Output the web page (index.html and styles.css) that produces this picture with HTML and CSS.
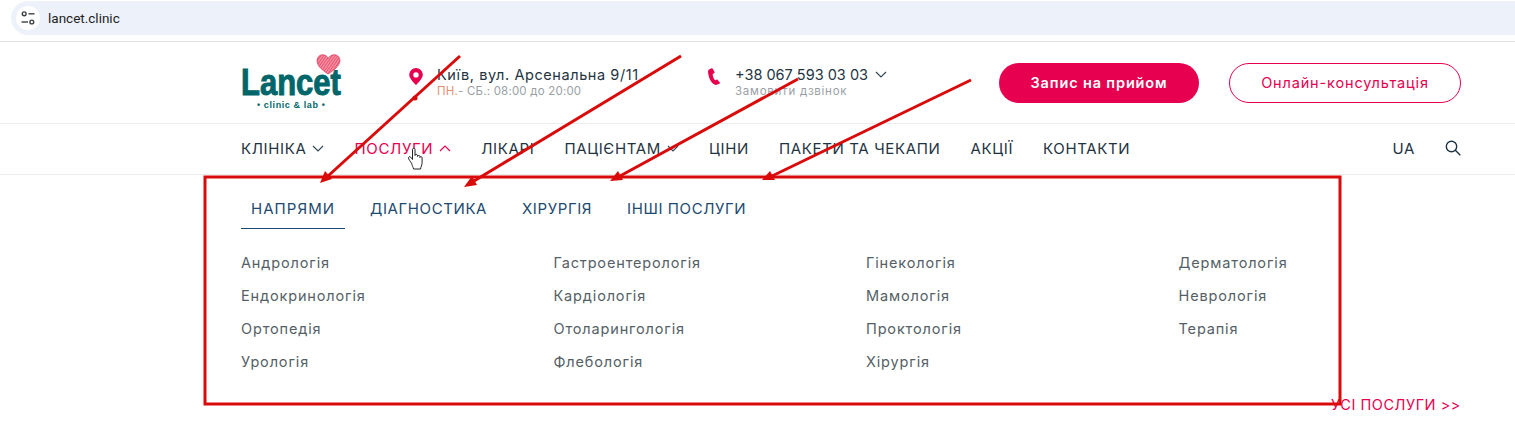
FILE: index.html
```html
<!DOCTYPE html>
<html lang="uk">
<head>
<meta charset="utf-8">
<title>Lancet</title>
<link rel="stylesheet" href="styles.css">
</head>
<body>
<div class="browser">
  <div class="urlbar">
    <span class="site-btn">
      <svg width="16" height="16" viewBox="0 0 16 16" fill="none" stroke="#3c4043" stroke-width="1.4"><circle cx="4.2" cy="3.8" r="1.9"/><path d="M8.5 3.8h6"/><circle cx="11.8" cy="12" r="1.9"/><path d="M1.5 12h6.5"/></svg>
    </span>
    <span class="url">lancet.clinic</span>
  </div>
</div>
<header class="top">
  <a class="logo">
    <svg class="heart" width="25" height="21" viewBox="0 0 26 22"><defs><pattern id="hatch" width="2.4" height="2.4" patternUnits="userSpaceOnUse" patternTransform="rotate(35)"><rect width="2.4" height="2.4" fill="#f58a9c"/><path d="M0 0v2.4" stroke="#de2f55" stroke-width="1"/></pattern></defs><path d="M12.5 21C8 17.5 1 13.500 1 7 1 3 4 .8 7 .8c2.500 0 4.500 1.400 5.800 3.800C14 2.200 16.500 .8 19 .8c3.500 0 6 2.600 6 6 0 5.700-7 10.500-12.500 14.200z" fill="url(#hatch)" stroke="#e0395f" stroke-width=".8"/></svg>
    <span class="logo-word">Lancet</span>
    <span class="logo-sub">• clinic &amp; lab •</span>
  </a>
  <div class="contact address">
    <svg width="14" height="17" viewBox="0 0 14 17"><path fill="#e6004f" fill-rule="evenodd" d="M7 0a6.800 6.800 0 0 0-6.800 6.800C.2 11 7 17 7 17s6.800-6 6.800-10.200A6.800 6.800 0 0 0 7 0zm0 4.200a2.700 2.700 0 1 1 0 5.400 2.700 2.700 0 0 1 0-5.400z"/></svg>
    <div class="contact-text">
      <span class="contact-main spaced">Київ, вул. Арсенальна 9/11</span>
      <span class="contact-sub"><b>ПН.</b>- СБ.: 08:00 до 20:00</span>
    </div>
  </div>
  <div class="contact phone">
    <svg width="12" height="17" viewBox="0 0 12 17"><path fill="#e6004f" d="M3.500.3 1 1.500C-.3 2.300 0 5 .6 7.500c.7 2.900 2 5.600 3.800 7.600 1.300 1.500 2.900 2 4.300 1.700l2.700-1c.5-.3.700-.8.400-1.300L9.700 12c-.3-.4-.8-.5-1.200-.3l-1.400.6C6 11.300 4.600 8 4.700 6l1.400-.8c.4-.2.600-.7.400-1.200L4.800.8C4.500.3 4 .1 3.500.3z"/></svg>
    <div class="contact-text">
      <span class="contact-main">+38 067 593 03 03
        <svg class="chev" width="12" height="7" viewBox="0 0 12 7" fill="none" stroke="#34495a" stroke-width="1.200"><path d="m1 1 5 5 5-5"/></svg>
      </span>
      <span class="contact-sub wide">Замовити дзвінок</span>
    </div>
  </div>
  <a class="btn btn-fill">Запис на прийом</a>
  <a class="btn btn-line">Онлайн-консультація</a>
</header>
<nav class="nav">
  <a class="nav-item">КЛІНІКА <svg class="chev" width="12" height="7" viewBox="0 0 12 7" fill="none" stroke="#34495a" stroke-width="1.200"><path d="m1 1 5 5 5-5"/></svg></a>
  <a class="nav-item active">ПОСЛУГИ <svg class="chev" width="12" height="7" viewBox="0 0 12 7" fill="none" stroke="#e6004f" stroke-width="1.200"><path d="m1 6 5-5 5 5"/></svg></a>
  <a class="nav-item">ЛІКАРІ</a>
  <a class="nav-item">ПАЦІЄНТАМ <svg class="chev" width="12" height="7" viewBox="0 0 12 7" fill="none" stroke="#34495a" stroke-width="1.200"><path d="m1 1 5 5 5-5"/></svg></a>
  <a class="nav-item">ЦІНИ</a>
  <a class="nav-item">ПАКЕТИ ТА ЧЕКАПИ</a>
  <a class="nav-item">АКЦІЇ</a>
  <a class="nav-item">КОНТАКТИ</a>
  <a class="nav-item lang">UA</a>
  <a class="search"><svg width="16" height="16" viewBox="0 0 16 16" fill="none" stroke="#1f3442" stroke-width="1.400"><circle cx="6.500" cy="6.500" r="5.200"/><path d="m10.300 10.300 5 5"/></svg></a>
</nav>
<section class="menu">
  <div class="tabs">
    <a class="tab current">НАПРЯМИ</a>
    <a class="tab">ДІАГНОСТИКА</a>
    <a class="tab">ХІРУРГІЯ</a>
    <a class="tab">ІНШІ ПОСЛУГИ</a>
  </div>
  <div class="links">
    <a>Андрологія</a><a>Гастроентерологія</a><a>Гінекологія</a><a>Дерматологія</a>
    <a>Ендокринологія</a><a>Кардіологія</a><a>Мамологія</a><a>Неврологія</a>
    <a>Ортопедія</a><a>Отоларингологія</a><a>Проктологія</a><a>Терапія</a>
    <a>Урологія</a><a>Флебологія</a><a>Хірургія</a>
  </div>
  <a class="all">УСІ ПОСЛУГИ &gt;&gt;</a>
</section>
<svg class="marks" width="1515" height="432" viewBox="0 0 1515 432">
  <rect x="205" y="177" width="1135" height="227" fill="none" stroke="#d90a0a" stroke-width="3"/>
  <g stroke="#d90a0a" stroke-width="3" fill="none">
    <path d="M460 56 328 176"/><path d="M681 56 474 181"/><path d="M798 79 620 176"/><path d="M971 80 772 176"/>
  </g>
  <g fill="#d90a0a">
    <path d="m320 183 5-12 7 8z"/><path d="m464 187 8-11 5 9z"/><path d="m610 181 8-10 5 9z"/><path d="m762 180 8-9 5 9z"/>
    <circle cx="415" cy="98" r="2.500"/>
  </g>
  <path d="M412 164c-1-2-4-5-3.500-6.500s2-.8 3 .5l1 1.500v-10c0-1.800 2.500-1.800 2.500 0v6c0-1.500 2.500-1.500 2.500 0v1c0-1.400 2.400-1.400 2.400 0v1c0-1.200 2.200-1.200 2.200 .2v4.800c0 3-1.500 4.500-1.500 6.500h-7c-.5-2-1.400-3-1.600-4.500z" fill="#fff" stroke="#222" stroke-width="1"/>
</svg>
</body>
</html>
```
FILE: styles.css
```css
* { box-sizing: border-box; }
html, body { margin: 0; height: 432px; overflow: hidden; background: #fff; }
body { position: relative; font-family: "Inter", "Open Sans", sans-serif; color: #1f3442; }
a { color: inherit; text-decoration: none; }

.browser { height: 42px; padding-top: 1px; border-bottom: 1px solid #e3e3e3; }
.urlbar { height: 34px; margin-left: 11px; padding-left: 5px; display: flex; align-items: center; background: #edf1f9; border-radius: 17px 0 0 17px; }
.site-btn { width: 24px; height: 24px; border-radius: 50%; background: #fff; display: flex; align-items: center; justify-content: center; }
.url { margin-left: 8px; font: 13.500px "Roboto", sans-serif; color: #1f1f1f; }

.top { height: 82px; padding: 0 54px 0 241px; display: flex; align-items: center; border-bottom: 1px solid #ececec; }
.logo { position: relative; width: 168px; height: 60px; display: flex; flex-direction: column; }
.heart { position: absolute; left: 75px; top: 1px; }
.logo-word { margin-top: 12px; font: bold 36px/36px "Liberation Sans", sans-serif; -webkit-text-stroke: 1px #00666a; color: #00666a; transform: scaleX(.86); transform-origin: left center; }
.logo-sub { font: bold 9px/9px "Liberation Sans", sans-serif; letter-spacing: .6px; color: #00666a; padding-left: 16px; }

.contact { display: flex; align-items: flex-start; gap: 14px; }
.address { width: 299px; }
.phone { width: 291px; gap: 15px; }
.contact-text { display: flex; flex-direction: column; margin-top: -2px; }
.contact-main { font-size: 14.500px; line-height: 18px; white-space: nowrap; }
.contact-main.spaced { letter-spacing: .58px; }
.contact-main .chev { margin-left: 3px; vertical-align: 2px; }
.contact-sub { font-size: 11.500px; line-height: 14px; color: #9a9fa6; white-space: nowrap; letter-spacing: .2px; }
.contact-sub.wide { letter-spacing: .75px; }
.contact-sub b { font-weight: 400; color: #e0906f; }

.btn { height: 40px; border-radius: 20px; display: flex; align-items: center; justify-content: center; font-size: 14.500px; font-weight: 500; letter-spacing: .85px; }
.btn-fill { width: 200px; background: #e6004f; color: #fff; font-weight: 600; }
.btn-line { width: 232px; margin-left: 30px; border: 1px solid #e6004f; color: #e6004f; font-weight: 400; }

.nav { height: 51px; padding: 0 54px 2px 241px; display: flex; align-items: center; gap: 30px; border-bottom: 1px solid #ececec; }
.nav-item { font-size: 15px; font-weight: 400; letter-spacing: .65px; white-space: nowrap; color: #1f3442; display: flex; align-items: center; gap: 6px; }
.nav-item.active { color: #e6004f; }
.lang { margin-left: auto; }
.search { display: flex; }

.menu { padding: 16px 0 0 241px; position: relative; }
.tabs { display: flex; gap: 15px; }
.tab { height: 38px; padding: 0 10px 2px; display: flex; align-items: center; font-size: 15px; font-weight: 400; letter-spacing: .6px; color: #1d4a70; border-bottom: 1px solid transparent; }
.tab.current { border-bottom-color: #1d4a70; letter-spacing: 1.050px; }
.links { margin-top: 17px; display: grid; grid-template-columns: repeat(4, 312.500px); grid-auto-rows: 33px; align-items: center; font-size: 14.500px; letter-spacing: .85px; color: #555f66; }
.all { display: block; margin: 18px 54px 0 0; text-align: right; font-size: 14.500px; letter-spacing: .55px; color: #e6004f; }

.marks { position: absolute; left: 0; top: 0; pointer-events: none; }
```
